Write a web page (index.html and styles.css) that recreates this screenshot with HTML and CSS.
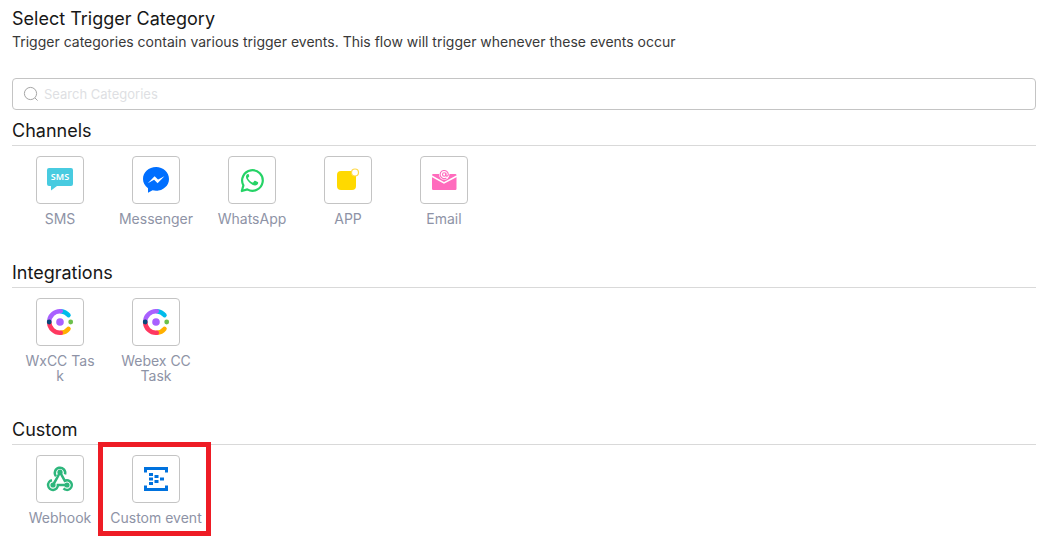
FILE: index.html
```html
<!DOCTYPE html>
<html lang="en">
<head>
<meta charset="utf-8">
<title>Select Trigger Category</title>
<link rel="stylesheet" href="styles.css">
</head>
<body>
<main class="page">
  <header class="intro">
    <h1 class="heading">Select Trigger Category</h1>
    <p class="description">Trigger categories contain various trigger events. This flow will trigger whenever these events occur</p>
  </header>
  <label class="search">
    <svg class="search-icon" viewBox="0 0 16 16" aria-hidden="true"><circle cx="7.5" cy="7.5" r="6.1"/><path d="M12 12l2.6 2.6"/></svg>
    <input class="search-input" type="search" placeholder="Search Categories" aria-label="Search Categories">
  </label>

  <section class="group">
    <h2 class="heading group-title">Channels</h2>
    <div class="items">
      <button class="item" type="button">
        <span class="tile"><svg viewBox="0 0 28 28" aria-hidden="true"><path fill="#48cbe0" d="M3 2h22q2 0 2 2v14q0 2-2 2H11l-6 4.500V20H3q-2 0-2-2V4q0-2 2-2z"/><text class="sms-text" x="14" y="14">SMS</text></svg></span>
        <span class="label">SMS</span>
      </button>
      <button class="item" type="button">
        <span class="tile"><svg viewBox="0 0 28 28" aria-hidden="true"><path fill="#006fff" d="M14 1C6.800 1 1 6.300 1 13c0 3.700 1.800 6.900 5 9.200v4.600l4.600-2.500c1.100.3 2.200.5 3.400.5 7.200 0 13-5.200 13-11.800S21.200 1 14 1z"/><path fill="#fff" d="M5.800 17.200l6.800-7 3.600 3.400 6.200-3.400-6.800 7-3.500-3.500z"/></svg></span>
        <span class="label">Messenger</span>
      </button>
      <button class="item" type="button">
        <span class="tile"><svg viewBox="0 0 28 28" aria-hidden="true"><path fill="none" stroke="#25d366" stroke-width="2.200" stroke-linejoin="round" d="M3.800 25l1.600-5.600A10.300 10.300 0 1 1 9.300 23.400z"/><path fill="#25d366" d="M10.800 8.500c-.4-.8-1.700-.6-2.200.2-1.100 1.500-.8 3.400.8 5.600 2.100 3 4.700 4.900 7.500 5.200 1.600.1 3.100-.9 3.300-2.500 0-.6-.1-.8-.5-1l-2.500-1.200c-.4-.2-.7 0-.9.3l-1 1.200c-.3.3-.5.3-.9.1-2-.9-3.400-2.200-4.300-4-.2-.3 0-.6.200-.8l.8-1c.2-.3.200-.6.1-.9z"/></svg></span>
        <span class="label">WhatsApp</span>
      </button>
      <button class="item" type="button">
        <span class="tile"><svg viewBox="0 0 28 28" aria-hidden="true"><rect x="3" y="5" width="19" height="19" rx="4" fill="#ffd900"/><circle cx="21" cy="6.500" r="3.500" fill="#fff" stroke="#ffd94a" stroke-width="1.200"/></svg></span>
        <span class="label">APP</span>
      </button>
      <button class="item" type="button">
        <span class="tile"><svg viewBox="0 0 28 28" aria-hidden="true"><rect x="2" y="8" width="24.500" height="16" rx="1.200" fill="#ff6bbd"/><path fill="none" stroke="#fff" stroke-width="1.500" d="M1.500 10L14 17l13-7"/><circle cx="14.200" cy="8.500" r="5.200" fill="#fff"/><circle cx="14.200" cy="8.500" r="1.700" fill="none" stroke="#ff6bbd" stroke-width="1.100"/><path fill="none" stroke="#ff6bbd" stroke-width="1.100" d="M15.900 6.700v2.400c0 1.600 2.400 1.400 2.400-.6a4.100 4.100 0 1 0-1.900 3.500"/></svg></span>
        <span class="label">Email</span>
      </button>
    </div>
  </section>

  <section class="group">
    <h2 class="heading group-title">Integrations</h2>
    <div class="items">
      <button class="item" type="button">
        <span class="tile"><svg class="ring" viewBox="0 0 28 28" aria-hidden="true"><path stroke="#00bceb" d="M15 3.200a10.800 10.800 0 0 1 7.500 4"/><path stroke="#a960ff" d="M3.200 14A10.800 10.800 0 0 1 14.800 3.200"/><path stroke="#ffb000" d="M15 24.800a10.800 10.800 0 0 0 7.500-4"/><path stroke="#ff3860" d="M3.200 14a10.800 10.800 0 0 0 11.600 10.800"/><circle cx="3.200" cy="14" r="2.400" fill="#07497a"/><circle cx="14" cy="14" r="3.800" fill="#a960ff"/><circle cx="24.700" cy="14" r="2.400" fill="#6cc04a"/></svg></span>
        <span class="label label-wrap">WxCC&nbsp;Task</span>
      </button>
      <button class="item" type="button">
        <span class="tile"><svg class="ring" viewBox="0 0 28 28" aria-hidden="true"><path stroke="#00bceb" d="M15 3.200a10.800 10.800 0 0 1 7.500 4"/><path stroke="#a960ff" d="M3.200 14A10.800 10.800 0 0 1 14.800 3.200"/><path stroke="#ffb000" d="M15 24.800a10.800 10.800 0 0 0 7.500-4"/><path stroke="#ff3860" d="M3.200 14a10.800 10.800 0 0 0 11.600 10.800"/><circle cx="3.200" cy="14" r="2.400" fill="#07497a"/><circle cx="14" cy="14" r="3.800" fill="#a960ff"/><circle cx="24.700" cy="14" r="2.400" fill="#6cc04a"/></svg></span>
        <span class="label label-wrap">Webex&nbsp;CC Task</span>
      </button>
    </div>
  </section>

  <section class="group">
    <h2 class="heading group-title">Custom</h2>
    <div class="items">
      <button class="item" type="button">
        <span class="tile"><svg viewBox="0 0 28 28" aria-hidden="true"><g fill="none" stroke="#2db67c" stroke-width="2.500"><path d="M10 11.200a5.200 5.200 0 1 1 9-1.800"/><path d="M14 7.200L10.800 13.500 7 20"/><path d="M14 7.200l4.800 8.600a4.800 4.800 0 1 1-1.300 7.600"/><path d="M6 15.200a4.900 4.900 0 1 0 5.900 4.800H21"/></g><g fill="#2db67c"><circle cx="14" cy="7.200" r="2.600"/><circle cx="7" cy="20" r="2.600"/><circle cx="21" cy="20" r="2.600"/></g></svg></span>
        <span class="label">Webhook</span>
      </button>
      <button class="item item-highlighted" type="button">
        <span class="tile"><svg viewBox="0 0 28 28" aria-hidden="true"><path fill="#0072de" d="M2 2h24v5.500h-3V5H5v2.500H2zM2 26h24v-5.500h-3V23H5v-2.500H2zM7 8h4v3H7zM7 12.500h4v3H7zM7 17h4v3H7zM12.500 10h4v3h-4zM12.500 15h4v3h-4zM18 12.500h4v3h-4z"/></svg></span>
        <span class="label">Custom event</span>
      </button>
    </div>
  </section>
</main>
</body>
</html>
```
FILE: styles.css
```css
* {
  box-sizing: border-box;
}

body {
  margin: 0;
  background: #fff;
  color: #171717;
  font-family: Inter, "Liberation Sans", sans-serif;
  font-size: 14px;
}

.page {
  padding: 7px 12px 16px;
}

.heading {
  margin: 0;
  font-size: 18px;
  font-weight: 400;
  line-height: 24px;
}

.intro {
  margin-bottom: 27px;
}

.description {
  margin: 2px 0 0;
  color: #393939;
  line-height: 18px;
}

.search {
  display: flex;
  align-items: center;
  gap: 5px;
  height: 32px;
  padding: 0 10px;
  border: 1px solid #c4c4c4;
  border-radius: 4px;
}

.search-icon {
  width: 16px;
  height: 16px;
  fill: none;
  stroke: #a5a5a5;
}

.search-input {
  flex: 1;
  min-width: 0;
  padding: 0;
  border: 0;
  outline: 0;
  background: none;
  font: inherit;
  font-size: 13px;
}

.search-input::placeholder {
  color: #dedfe3;
}

.group {
  margin-top: 35px;
}

.search + .group {
  margin-top: 9px;
}

.group-title {
  padding-bottom: 2px;
  border-bottom: 1px solid #d9d9d9;
}

.items {
  display: flex;
  flex-wrap: wrap;
  padding-top: 10px;
}

.item {
  position: relative;
  display: flex;
  flex-direction: column;
  align-items: center;
  gap: 7px;
  width: 96px;
  padding: 0;
  border: 0;
  background: none;
  color: #8e93a6;
  font: inherit;
  line-height: 15px;
  cursor: pointer;
}

.tile {
  display: grid;
  place-items: center;
  width: 48px;
  height: 48px;
  border: 1px solid #c4c4c4;
  border-radius: 4px;
}

.tile svg {
  width: 28px;
  height: 28px;
}

.label {
  white-space: nowrap;
}

.label-wrap {
  width: 72px;
  white-space: normal;
  overflow-wrap: anywhere;
}

.ring path {
  fill: none;
  stroke-width: 4.500;
  stroke-linecap: round;
}

.sms-text {
  fill: #fff;
  font-family: "Noto Sans", sans-serif;
  font-size: 9px;
  font-weight: 600;
  text-anchor: middle;
}

.item-highlighted::after {
  content: "";
  position: absolute;
  inset: -13px -7px -11px -10px;
  border: 5px solid #ee1c25;
}
```
